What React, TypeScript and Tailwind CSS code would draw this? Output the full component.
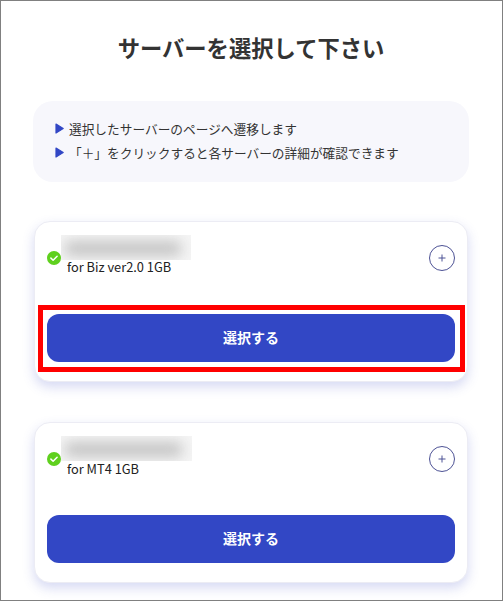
const FONT = "font-['Noto_Sans_CJK_JP','Noto_Sans',sans-serif]";

function Check() {
  return (
    <svg width="14" height="14" viewBox="0 0 14 14" className="shrink-0">
      <circle cx="7" cy="7" r="7" fill="#5fd01e" />
      <path d="M3.9 7.1 6.1 9.2 10.1 5.2" fill="none" stroke="#fff" strokeWidth="1.5" strokeLinecap="round" strokeLinejoin="round" />
    </svg>
  );
}

function Tri() {
  return (
    <svg width="9" height="11" viewBox="0 0 9 11" className="shrink-0">
      <path d="M1 1 8.2 5.5 1 10Z" fill="#3247c5" stroke="#3247c5" strokeWidth="1.2" strokeLinejoin="round" />
    </svg>
  );
}

function Plus() {
  return (
    <div className="flex h-[26px] w-[26px] items-center justify-center rounded-full border border-[#4d5295]">
      <svg width="8" height="8" viewBox="0 0 8 8">
        <path d="M4 .5v7M.5 4h7" stroke="#4d5295" strokeWidth="1" fill="none" />
      </svg>
    </div>
  );
}

function Blur({ width }: { width: string }) {
  return (
    <div className={`h-[25px] ${width} overflow-hidden bg-[#f5f5f5]`}>
      <div className="ml-[4px] mr-[10px] mt-[7px] h-[13px] rounded-sm bg-[#bdbdbd] blur-[7px]" />
    </div>
  );
}

function Card({ label, blurW, marked, textTop }: { label: string; blurW: string; marked?: boolean; textTop: string }) {
  return (
    <div className="mx-px h-[161px] rounded-[16px] border border-[#ececf4] bg-white px-[12px] shadow-[0_5px_12px_rgba(70,80,200,0.22)]">
      <div className="flex h-[92px] items-start justify-between">
        <div className="flex items-start pt-[13px]">
          <div className="mt-[16px]"><Check /></div>
          <div>
            <Blur width={blurW} />
            <p className={`${textTop} ml-[6px] text-[12.8px] leading-[14px] text-[#222222]`}>{label}</p>
          </div>
        </div>
        <div className="mt-[23px]"><Plus /></div>
      </div>
      <div className="relative">
        <button className="flex h-[48px] w-full items-center justify-center rounded-[12px] bg-[#3247c5] pb-[2px] text-[14px] font-bold text-white">
          選択する
        </button>
        {marked && <div className="absolute -top-[9px] -right-[10px] -bottom-[10px] -left-[9px] border-[5px] border-[#ff0000]" />}
      </div>
    </div>
  );
}

export default function App() {
  return (
    <div className={`${FONT} h-[601px] w-[503px] overflow-hidden border border-[#808080] bg-white pl-[32px] pr-[33px]`}>
      <h1 className="mt-[28px] text-center text-[22.3px] leading-[36px] font-bold text-[#333333]">サーバーを選択して下さい</h1>
      <div className="mt-[36px] flex h-[81px] flex-col justify-center gap-[6px] rounded-[20px] bg-[#f7f7fc] pb-[2px] pl-[22px] text-[12.7px] leading-[18px] text-[#333333]">
        <div className="flex items-center gap-[5px]"><Tri /><span>選択したサーバーのページへ遷移します</span></div>
        <div className="flex items-center gap-[5px]"><Tri /><span>「＋」をクリックすると各サーバーの詳細が確認できます</span></div>
      </div>
      <div className="mt-[39px] flex flex-col gap-[40px]">
        <Card label="for Biz ver2.0 1GB" blurW="w-[130px]" marked textTop="mt-0" />
        <Card label="for MT4 1GB" blurW="w-[131px]" textTop="mt-px" />
      </div>
    </div>
  );
}
